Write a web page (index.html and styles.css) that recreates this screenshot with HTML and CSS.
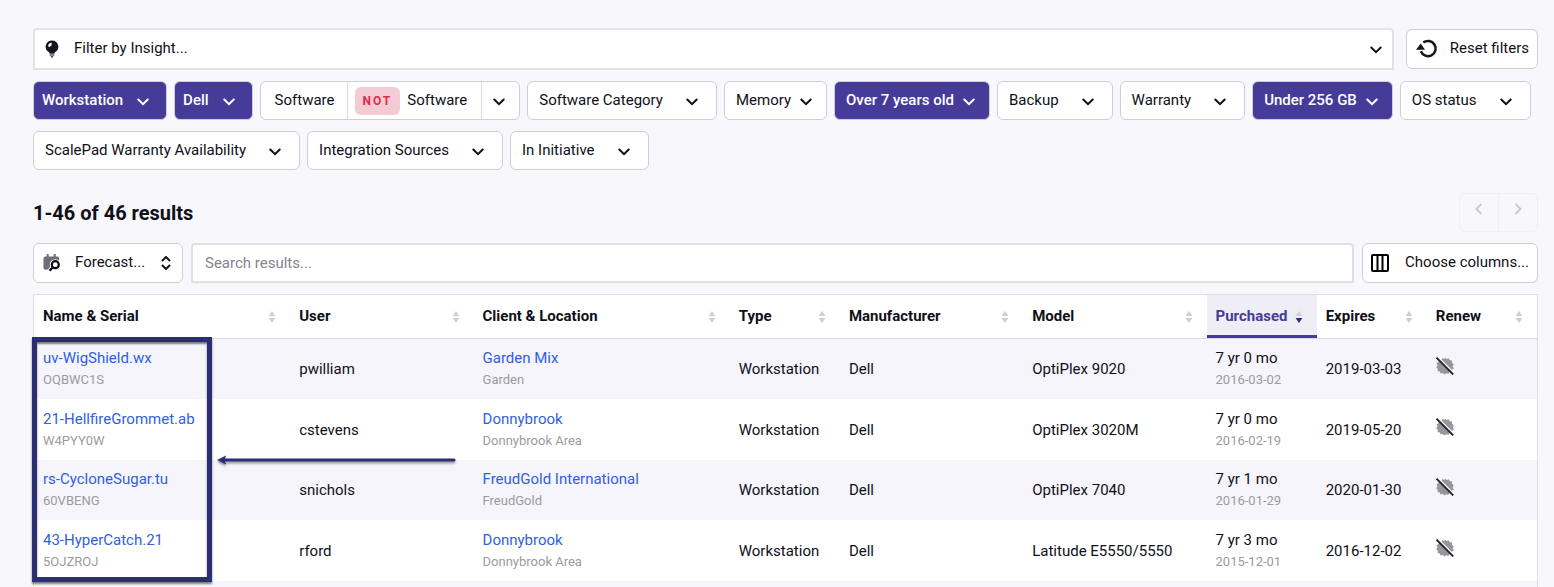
FILE: index.html
```html
<!DOCTYPE html>
<html lang="en">
  <head>
    <meta charset="UTF-8" />
    <meta name="viewport" content="width=device-width, initial-scale=1.0" />
    <title>Hardware assets</title>
    <link rel="stylesheet" href="styles.css">
  </head>
  <body>
    <!-- Shared icon shapes -->
    <svg class="sprite" aria-hidden="true">
      <symbol id="chevron" viewBox="0 0 12 8"><path d="M1.3 1.5 6 6.2l4.7-4.7" fill="none" stroke="currentColor" stroke-width="2" stroke-linecap="round"/></symbol>
      <symbol id="sort" viewBox="0 0 8 12"><path d="M4 0 7.4 5H.6z"/><path class="sort-down" d="M.6 7h6.8L4 12z"/></symbol>
      <symbol id="no-renew" viewBox="0 0 18 18">
        <path d="M9 .6l1.700 1.500 2.100-.9 1 2.100 2.300.2-.1 2.300L17.800 7.400l-1.100 2 1.100 2-1.900 1.300-.1 2.300-2.300.1-1.200 2-2.100-.9L8.400 17.600l-1.600-1.600-2.200.6-.8-2.100-2.300-.4.300-2.300L.2 10.200l1.300-1.900L.6 6.200l2-1.100.300-2.300 2.300.1L6.600 1.100l2 .8z" fill="#97979b"/>
        <path d="M2 .2 17.900 16" stroke="#fff" stroke-width="1.600"/>
        <path d="M.5 .7 17.200 17.400" stroke="#22232e" stroke-width="1.900"/>
      </symbol>
    </svg>

    <main class="page">
      <div class="bar">
        <label class="insight">
          <svg class="bulb" viewBox="0 0 14 18"><path d="M7 .5a6.300 6.300 0 0 0-3.400 11.600c.7.500 1 .9 1 1.700h4.800c0-.8.300-1.200 1-1.700A6.300 6.300 0 0 0 7 .5z" fill="#14151f"/><path d="M3 6.300A4 4 0 0 1 6.600 2.700v2.600L4.700 6.900z" fill="#fff"/><path d="M4.600 14.600h4.800v1H4.600zM5.600 16.300h2.800L7.700 17.500H6.300z" fill="#14151f"/></svg>
          <select aria-label="Filter by Insight">
            <option>Filter by Insight...</option>
          </select>
          <svg class="chevron"><use href="#chevron"/></svg>
        </label>
        <button type="button" class="button reset">
          <svg class="reset-icon" viewBox="0 0 22 20"><path d="M7.300 3.600a7.600 7.600 0 1 1-2.400 8.700" fill="none" stroke="#14151f" stroke-width="2.500"/><path d="M0 10.800 4.800 4.400 9 10.800z" fill="#14151f"/></svg>
          <span>Reset filters</span>
        </button>
      </div>

      <div class="chips">
        <button type="button" class="chip active tight"><span>Workstation</span><svg class="chevron"><use href="#chevron"/></svg></button>
        <button type="button" class="chip active tight"><span>Dell</span><svg class="chevron"><use href="#chevron"/></svg></button>
        <div class="chip-group">
          <button type="button"><span>Software</span></button>
          <button type="button"><strong class="not">NOT</strong><span>Software</span></button>
          <button type="button" aria-label="More software filters"><svg class="chevron"><use href="#chevron"/></svg></button>
        </div>
        <button type="button" class="chip"><span>Software Category</span><svg class="chevron"><use href="#chevron"/></svg></button>
        <button type="button" class="chip compact"><span>Memory</span><svg class="chevron"><use href="#chevron"/></svg></button>
        <button type="button" class="chip active compact"><span>Over 7 years old</span><svg class="chevron"><use href="#chevron"/></svg></button>
        <button type="button" class="chip"><span>Backup</span><svg class="chevron"><use href="#chevron"/></svg></button>
        <button type="button" class="chip"><span>Warranty</span><svg class="chevron"><use href="#chevron"/></svg></button>
        <button type="button" class="chip active compact"><span>Under 256 GB</span><svg class="chevron"><use href="#chevron"/></svg></button>
        <button type="button" class="chip"><span>OS status</span><svg class="chevron"><use href="#chevron"/></svg></button>
        <button type="button" class="chip"><span>ScalePad Warranty Availability</span><svg class="chevron"><use href="#chevron"/></svg></button>
        <button type="button" class="chip"><span>Integration Sources</span><svg class="chevron"><use href="#chevron"/></svg></button>
        <button type="button" class="chip"><span>In Initiative</span><svg class="chevron"><use href="#chevron"/></svg></button>
      </div>

      <div class="results-head">
        <h2>1-46 of 46 results</h2>
        <div class="pager">
          <button type="button" disabled aria-label="Previous page"><svg viewBox="0 0 8 12"><path d="M6.500 1 1.500 6l5 5" fill="none" stroke="currentColor" stroke-width="2"/></svg></button>
          <button type="button" disabled aria-label="Next page"><svg viewBox="0 0 8 12"><path d="m1.500 1 5 5-5 5" fill="none" stroke="currentColor" stroke-width="2"/></svg></button>
        </div>
      </div>

      <div class="toolbar">
        <label class="forecast">
          <svg class="forecast-icon" viewBox="0 0 18 18"><path d="M2.500 2.500h1.200V0h2v2.500h5V0h2v2.500h1.800a1.500 1.500 0 0 1 1.500 1.500v10a1.500 1.500 0 0 1-1.500 1.500h-11A2 2 0 0 1 .5 13.500v-9a2 2 0 0 1 2-2z" fill="#6f6f73"/><path d="m10 13-3.300 3.700" stroke="#fff" stroke-width="4.500"/><circle cx="12.300" cy="10.700" r="5.500" fill="#fff"/><circle cx="12.300" cy="10.700" r="3.500" fill="#fff" stroke="#0c0c14" stroke-width="2.200"/><path d="m9.800 13.200-3.200 3.500" stroke="#0c0c14" stroke-width="2.400"/></svg>
          <select aria-label="Forecast">
            <option>Forecast...</option>
          </select>
          <svg class="updown" viewBox="0 0 10 14"><path d="M1 5l4-4 4 4M1 9l4 4 4-4" fill="none" stroke="#14151f" stroke-width="2"/></svg>
        </label>
        <input type="text" class="search" placeholder="Search results..." aria-label="Search results" />
        <button type="button" class="button columns">
          <svg class="columns-icon" viewBox="0 0 18 18"><rect x="1" y="1" width="16" height="16" rx="1" fill="none" stroke="#000" stroke-width="2"/><path d="M6.500 1v16M11.500 1v16" stroke="#000" stroke-width="2"/></svg>
          <span>Choose columns...</span>
        </button>
      </div>

      <div class="table-wrap">
        <table>
          <colgroup>
            <col class="wide"><col class="medium"><col class="wide"><col class="narrow"><col class="medium"><col class="medium"><col class="narrow"><col class="narrow"><col class="narrow">
          </colgroup>
          <thead>
            <tr>
              <th><div>Name &amp; Serial<svg class="sort"><use href="#sort"/></svg></div></th>
              <th><div>User<svg class="sort"><use href="#sort"/></svg></div></th>
              <th><div>Client &amp; Location<svg class="sort"><use href="#sort"/></svg></div></th>
              <th><div>Type<svg class="sort"><use href="#sort"/></svg></div></th>
              <th><div>Manufacturer<svg class="sort"><use href="#sort"/></svg></div></th>
              <th><div>Model<svg class="sort"><use href="#sort"/></svg></div></th>
              <th class="sorted" aria-sort="descending"><div>Purchased<svg class="sort"><use href="#sort"/></svg></div></th>
              <th><div>Expires<svg class="sort"><use href="#sort"/></svg></div></th>
              <th><div>Renew<svg class="sort"><use href="#sort"/></svg></div></th>
            </tr>
          </thead>
          <tbody>
            <tr>
              <td><a href="#">uv-WigShield.wx</a><small>OQBWC1S</small></td>
              <td>pwilliam</td>
              <td><a href="#">Garden Mix</a><small>Garden</small></td>
              <td>Workstation</td>
              <td>Dell</td>
              <td>OptiPlex 9020</td>
              <td>7 yr 0 mo<small>2016-03-02</small></td>
              <td>2019-03-03</td>
              <td><svg class="renew"><use href="#no-renew"/></svg></td>
            </tr>
            <tr>
              <td><a href="#">21-HellfireGrommet.ab</a><small>W4PYY0W</small></td>
              <td>cstevens</td>
              <td><a href="#">Donnybrook</a><small>Donnybrook Area</small></td>
              <td>Workstation</td>
              <td>Dell</td>
              <td>OptiPlex 3020M</td>
              <td>7 yr 0 mo<small>2016-02-19</small></td>
              <td>2019-05-20</td>
              <td><svg class="renew"><use href="#no-renew"/></svg></td>
            </tr>
            <tr>
              <td><a href="#">rs-CycloneSugar.tu</a><small>60VBENG</small></td>
              <td>snichols</td>
              <td><a href="#">FreudGold International</a><small>FreudGold</small></td>
              <td>Workstation</td>
              <td>Dell</td>
              <td>OptiPlex 7040</td>
              <td>7 yr 1 mo<small>2016-01-29</small></td>
              <td>2020-01-30</td>
              <td><svg class="renew"><use href="#no-renew"/></svg></td>
            </tr>
            <tr>
              <td><a href="#">43-HyperCatch.21</a><small>5OJZROJ</small></td>
              <td>rford</td>
              <td><a href="#">Donnybrook</a><small>Donnybrook Area</small></td>
              <td>Workstation</td>
              <td>Dell</td>
              <td>Latitude E5550/5550</td>
              <td>7 yr 3 mo<small>2015-12-01</small></td>
              <td>2016-12-02</td>
              <td><svg class="renew"><use href="#no-renew"/></svg></td>
            </tr>
            <tr><td class="end" colspan="9"></td></tr>
          </tbody>
        </table>

        <!-- Callout over the name column -->
        <div class="callout"></div>
        <svg class="arrow" viewBox="0 0 240 12"><path d="M6 6h231" stroke="#2a2f73" stroke-width="3" stroke-linecap="round"/><path d="M0 6 9 1.500 7.500 6 9 10.500z" fill="#2a2f73"/></svg>
      </div>
    </main>
  </body>
</html>
```

FILE: styles.css
```css
* {
  box-sizing: border-box;
}

body {
  margin: 0;
  background-color: #f8f7fc;
  color: #0f1018;
  font-family: Roboto, "Liberation Sans", sans-serif;
  font-size: 15px;
  line-height: 20px;
}

button,
select,
input {
  font: inherit;
  color: inherit;
}

button {
  cursor: pointer;
  white-space: nowrap;
}

svg {
  display: block;
  flex: none;
}

.sprite {
  position: absolute;
  width: 0;
  height: 0;
}

.page {
  padding: 28px 16px 0 33px;
}

.chevron {
  width: 12px;
  height: 8px;
  margin-top: 2px;
}

/* Insight filter and reset */
.bar {
  display: flex;
  align-items: center;
  gap: 12px;
}

.insight {
  flex: 1;
  display: flex;
  align-items: center;
  height: 42px;
  padding: 0 10px;
  border: 2px solid #e3e3e5;
  border-radius: 4px 4px 0 0;
  background-color: #fff;
}

.bulb {
  width: 14px;
  height: 18px;
}

select {
  flex: 1;
  min-width: 0;
  padding: 0 0 2px;
  border: none;
  background: none;
  appearance: none;
  outline: none;
}

.insight select {
  margin-left: 15px;
}

.button {
  display: flex;
  align-items: center;
  height: 40px;
  padding: 0 8px 0 9px;
  border: 1px solid #cfcdda;
  border-radius: 6px;
  background-color: #fff;
}

.button span,
.chip span,
.chip-group span {
  padding-bottom: 2px;
}

.reset {
  gap: 12px;
}

.reset-icon {
  width: 22px;
  height: 20px;
}

/* Filter chips */
.chips {
  display: flex;
  flex-wrap: wrap;
  gap: 11px 7px;
  margin-top: 11px;
}

.chip {
  display: flex;
  align-items: center;
  gap: 23px;
  height: 39px;
  padding: 0 18px 0 11px;
  border: 1px solid #cfcdda;
  border-radius: 6px;
  background-color: #fff;
}

.chip.compact {
  gap: 9px;
  padding-right: 14px;
}

.chip.tight {
  gap: 14px;
  padding: 0 17px 0 8px;
}

.chip.active {
  background-color: #473b99;
  color: #fff;
  font-weight: 500;
}

.chip-group {
  display: flex;
  height: 39px;
  border: 1px solid #cfcdda;
  border-radius: 6px;
  background-color: #fff;
}

.chip-group button {
  display: flex;
  align-items: center;
  gap: 7px;
  padding: 0 14px 0 7px;
  border: none;
  background: none;
}

.chip-group button:first-child {
  padding: 0 12px 0 14px;
}

.chip-group button:last-child {
  padding: 0 14px 0 11px;
}

.chip-group button + button {
  border-left: 1px solid #dddce4;
}

.not {
  padding: 4px 8px;
  border-radius: 6px;
  background-color: #f5cbd3;
  color: #dc2f50;
  font-size: 12px;
  letter-spacing: 2px;
}

/* Result count and paging */
.results-head {
  display: flex;
  align-items: center;
  justify-content: space-between;
  margin-top: 23px;
}

h2 {
  margin: 0;
  font-size: 20px;
  font-weight: 700;
}

.pager {
  display: flex;
  height: 39px;
  border: 1px solid #f0eff4;
  border-radius: 6px;
}

.pager button {
  display: flex;
  align-items: center;
  justify-content: center;
  width: 38px;
  padding: 0 0 8px;
  border: none;
  background: none;
  color: #cbcbcf;
}

.pager button + button {
  width: 39px;
  border-left: 1px solid #f0eff4;
}

.pager svg {
  width: 8px;
  height: 12px;
}

/* Toolbar above the table */
.toolbar {
  display: flex;
  align-items: center;
  gap: 8px;
  margin-top: 11px;
}

.forecast {
  display: flex;
  align-items: center;
  width: 150px;
  height: 40px;
  padding: 0 11px 0 9px;
  border: 1px solid #cfcdda;
  border-radius: 6px;
  background-color: #fff;
}

.forecast select {
  margin-left: 14px;
}

.forecast-icon {
  width: 18px;
  height: 18px;
}

.updown {
  width: 10px;
  height: 14px;
}

.search {
  flex: 1;
  min-width: 0;
  height: 40px;
  padding: 0 12px;
  border: 2px solid #e0e0e3;
  border-radius: 4px 4px 0 0;
  background-color: #fff;
}

.search::placeholder {
  color: #85858a;
}

.columns {
  gap: 16px;
  padding-left: 8px;
}

.columns-icon {
  width: 18px;
  height: 18px;
}

/* Asset table */
.table-wrap {
  position: relative;
  margin-top: 11px;
}

table {
  width: 100%;
  table-layout: fixed;
  border: 1px solid #dddde2;
  border-bottom: none;
  border-spacing: 0;
  background-color: #fff;
}

.wide {
  width: 17.05%;
}

.medium {
  width: 12.2%;
}

.narrow {
  width: 7.33%;
}

th {
  height: 44px;
  padding: 0 14px 1px 9px;
  border-bottom: 1px solid #d9d9e0;
  text-align: left;
  font-weight: 700;
  white-space: nowrap;
}

th div {
  display: flex;
  align-items: center;
  justify-content: space-between;
}

.sort {
  --down: #cfcfd2;
  width: 8px;
  height: 12px;
  margin-top: 2px;
  fill: #cfcfd2;
}

.sort-down {
  fill: var(--down);
}

.sorted {
  background-color: #efeef6;
  box-shadow: inset 0 -3px #473b99;
  color: #473b99;
}

.sorted .sort {
  --down: #2f2a80;
}

td {
  height: 60px;
  padding: 0 9px;
  white-space: nowrap;
}

tbody tr:nth-child(odd) {
  background-color: #f6f5fb;
}

tbody tr:nth-child(even) td {
  height: 61px;
}

td.end {
  height: 6px;
  padding: 0;
}

td a {
  display: block;
  color: #2f5fe3;
  text-decoration: none;
}

td small {
  display: block;
  margin-top: 2px;
  color: #9b9b9f;
  font-size: 13px;
}

.renew {
  width: 18px;
  height: 18px;
  margin-bottom: 6px;
}

/* Callout box and arrow drawn on top of the table */
.callout {
  position: absolute;
  top: 43px;
  left: -1px;
  width: 180px;
  height: 245px;
  border: 5px solid #2a2f73;
  box-shadow: 0 2px 2px rgba(0, 0, 0, 0.5), inset 0 2px 2px rgba(0, 0, 0, 0.5);
}

.arrow {
  position: absolute;
  top: 160px;
  left: 184px;
  width: 240px;
  height: 12px;
  filter: drop-shadow(0 2px 1px rgba(0, 0, 0, 0.4));
}
```
